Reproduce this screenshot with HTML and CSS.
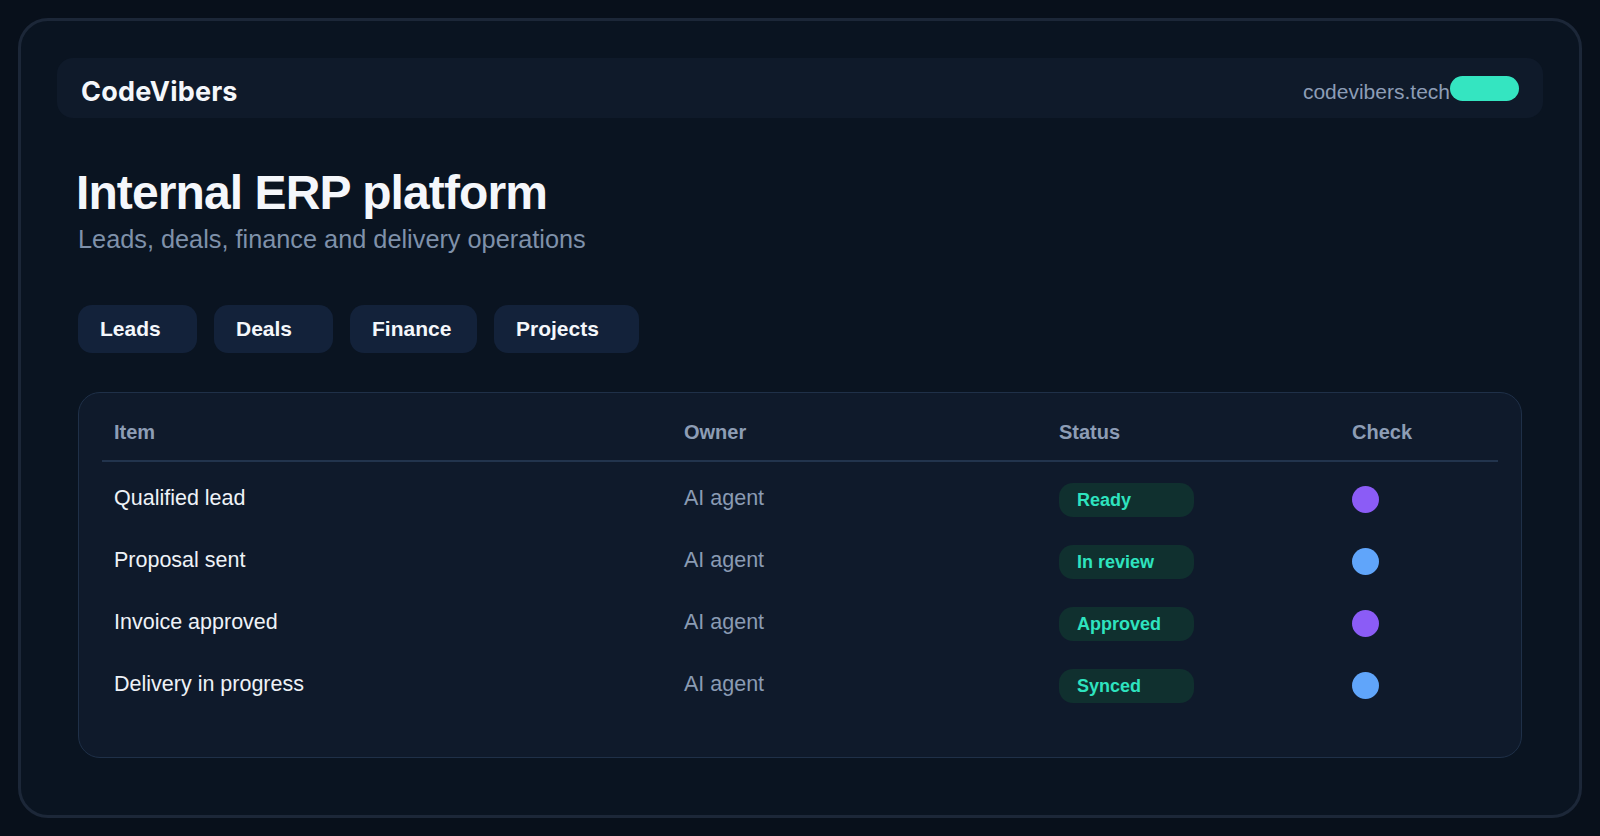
FILE: index.html
```html
<!DOCTYPE html>
<html lang="en">
<head>
<meta charset="utf-8">
<title>CodeVibers — Internal ERP platform</title>
<link rel="stylesheet" href="styles.css">
</head>
<body>
<div class="frame">
  <header class="topbar">
    <div class="brand">CodeVibers</div>
    <div class="site">
      <span class="site-url">codevibers.tech</span>
      <span class="site-pill"></span>
    </div>
  </header>

  <main class="content">
    <h1 class="title">Internal ERP platform</h1>
    <p class="subtitle">Leads, deals, finance and delivery operations</p>

    <nav class="tabs">
      <button class="tab tab-leads">Leads</button>
      <button class="tab tab-deals">Deals</button>
      <button class="tab tab-finance">Finance</button>
      <button class="tab tab-projects">Projects</button>
    </nav>

    <section class="card">
      <div class="grid head">
        <div class="cell">Item</div>
        <div class="cell">Owner</div>
        <div class="cell">Status</div>
        <div class="cell">Check</div>
      </div>
      <div class="rows">
        <div class="grid row">
          <div class="cell item">Qualified lead</div>
          <div class="cell owner">AI agent</div>
          <div class="cell"><span class="badge">Ready</span></div>
          <div class="cell"><span class="dot dot-purple"></span></div>
        </div>
        <div class="grid row">
          <div class="cell item">Proposal sent</div>
          <div class="cell owner">AI agent</div>
          <div class="cell"><span class="badge">In review</span></div>
          <div class="cell"><span class="dot dot-blue"></span></div>
        </div>
        <div class="grid row">
          <div class="cell item">Invoice approved</div>
          <div class="cell owner">AI agent</div>
          <div class="cell"><span class="badge">Approved</span></div>
          <div class="cell"><span class="dot dot-purple"></span></div>
        </div>
        <div class="grid row">
          <div class="cell item">Delivery in progress</div>
          <div class="cell owner">AI agent</div>
          <div class="cell"><span class="badge">Synced</span></div>
          <div class="cell"><span class="dot dot-blue"></span></div>
        </div>
      </div>
    </section>
  </main>
</div>
</body>
</html>
```

FILE: styles.css
```css
* { box-sizing: border-box; }

html, body {
  margin: 0;
  padding: 0;
  background: #08101b;
  height: 100%;
}

body {
  font-family: "Liberation Sans", Arial, sans-serif;
  color: #f1f5f9;
  padding: 18px;
  height: 836px;
}

.frame {
  height: 800px;
  border: 3px solid #1c2738;
  border-radius: 30px;
  background: #0a1421;
  padding: 37px 36px 0;
}

.topbar {
  height: 60px;
  border-radius: 16px;
  background: #0f1a2a;
  padding: 0 24px;
  display: flex;
  align-items: center;
  justify-content: space-between;
}

.brand {
  font-family: Inter, "Noto Sans", sans-serif;
  font-weight: 700;
  font-size: 27px;
  color: #f4f7fb;
  margin-top: 7px;
  letter-spacing: 0.2px;
}

.site {
  display: flex;
  align-items: center;
}

.site-url {
  font-size: 21px;
  color: #8c9db6;
  margin-top: 8px;
}

.site-pill {
  width: 69px;
  height: 25px;
  border-radius: 13px;
  background: #34e5c1;
}

.content {
  padding: 0 21px;
}

.title {
  margin: 46px 0 0 -2px;
  font-size: 48px;
  line-height: 58px;
  font-weight: 700;
  color: #f5f7fb;
  letter-spacing: -0.9px;
}

.subtitle {
  margin: 2px 0 0;
  font-size: 25.3px;
  line-height: 31px;
  color: #7f91aa;
}

.tabs {
  display: flex;
  gap: 17px;
  margin-top: 50px;
}

.tab {
  height: 48px;
  border: 0;
  border-radius: 14px;
  background: #13223a;
  color: #f4f7fb;
  font-family: "Liberation Sans", Arial, sans-serif;
  font-weight: 700;
  font-size: 21px;
  text-align: left;
  padding: 0 0 0 22px;
}

.tab-leads { width: 119px; }
.tab-deals { width: 119px; }
.tab-finance { width: 127px; }
.tab-projects { width: 145px; }

.card {
  margin-top: 39px;
  width: 1444px;
  border: 1px solid #1f3048;
  border-radius: 22px;
  background: #0f1a2b;
  padding: 14px 23px 24px;
  height: 366px;
}

.grid {
  display: grid;
  grid-template-columns: 570px 375px 293px 1fr;
  align-items: center;
}

.cell {
  padding: 0 12px;
}

.head {
  height: 55px;
  padding-bottom: 3px;
  border-bottom: 2px solid #22344d;
  font-weight: 700;
  font-size: 20px;
  color: #8d9db5;
}

.rows {
  padding-top: 5px;
}

.row {
  height: 62px;
  font-size: 21.5px;
}

.item { color: #eef2f7; }
.owner { color: #8a9bb3; }

.badge {
  display: inline-flex;
  align-items: center;
  width: 135px;
  height: 34px;
  margin-top: 4px;
  padding-left: 18px;
  border-radius: 14px;
  background: #10302f;
  color: #2ee3bf;
  font-weight: 700;
  font-size: 18px;
}

.dot {
  display: block;
  width: 27px;
  height: 27px;
  margin-top: 3px;
  border-radius: 50%;
}

.dot-purple { background: #8b5cf6; }
.dot-blue { background: #60a5fa; }
```
